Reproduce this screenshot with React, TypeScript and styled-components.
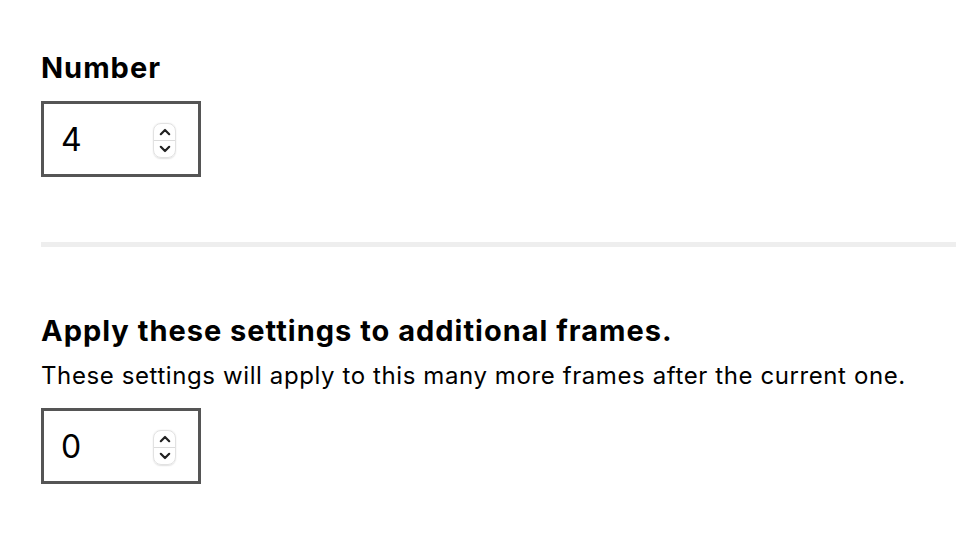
import styled, { createGlobalStyle } from "styled-components";

const GlobalStyle = createGlobalStyle`
  html, body {
    margin: 0;
    padding: 0;
    background: #ffffff;
  }
  body {
    font-family: Inter, "Liberation Sans", Arial, sans-serif;
    color: #000000;
    overflow: hidden;
  }
`;

const Page = styled.main`
  padding: 50px 0 0 41px;
  width: 100%;
  box-sizing: border-box;
`;

const Section = styled.section`
  display: flex;
  flex-direction: column;
  align-items: flex-start;
`;

const Title = styled.h2<{ $gap?: number }>`
  margin: 0 0 ${(p) => p.$gap ?? 0}px;
  font-size: 29px;
  line-height: 35px;
  font-weight: 700;
  letter-spacing: 1px;
`;

const Hint = styled.p`
  margin: 13px 0 18px;
  font-size: 24px;
  line-height: 29px;
  letter-spacing: 0.6px;
`;

const Divider = styled.hr`
  border: none;
  height: 5px;
  background: #eeeeee;
  margin: 65px 0 66px;
  width: calc(100% + 40px);
`;

const Field = styled.div`
  display: flex;
  align-items: center;
  box-sizing: border-box;
  width: 160px;
  height: 76px;
  border: 3px solid #555555;
  padding: 0 22px 0 17px;
  background: #ffffff;
`;

const NumberText = styled.input`
  flex: 1;
  min-width: 0;
  border: none;
  outline: none;
  padding: 0;
  background: transparent;
  font-family: inherit;
  font-size: 32px;
  color: #000000;
`;

const Spinner = styled.div`
  display: flex;
  flex-direction: column;
  width: 23px;
  height: 35px;
  margin-top: 3px;
  box-sizing: border-box;
  border: 1px solid #e2e2e2;
  border-radius: 8px;
  box-shadow: 0 0.5px 1.5px rgba(0, 0, 0, 0.12);
  overflow: hidden;
`;

const SpinHalf = styled.span<{ $top?: boolean }>`
  flex: 1;
  display: flex;
  align-items: center;
  justify-content: center;
  border-bottom: ${(p) => (p.$top ? "1px solid #dcdcdc" : "none")};
`;

const Chevron = ({ up }: { up?: boolean }) => (
  <svg width="12" height="8" viewBox="0 0 12 8" fill="none">
    <path
      d={up ? "M1.8 6.2 L6 2 L10.2 6.2" : "M1.8 1.8 L6 6 L10.2 1.8"}
      stroke="#222222"
      strokeWidth="2.2"
      strokeLinecap="round"
      strokeLinejoin="round"
    />
  </svg>
);

const NumberField = ({ value }: { value: number }) => (
  <Field>
    <NumberText type="text" defaultValue={value} />
    <Spinner>
      <SpinHalf $top>
        <Chevron up />
      </SpinHalf>
      <SpinHalf>
        <Chevron />
      </SpinHalf>
    </Spinner>
  </Field>
);

const App = () => {
  return (
    <>
      <GlobalStyle />
      <Page>
        <Section>
          <Title $gap={16}>Number</Title>
          <NumberField value={4} />
        </Section>

        <Divider />

        <Section>
          <Title>Apply these settings to additional frames.</Title>
          <Hint>These settings will apply to this many more frames after the current one.</Hint>
          <NumberField value={0} />
        </Section>
      </Page>
    </>
  );
};

export default App;
